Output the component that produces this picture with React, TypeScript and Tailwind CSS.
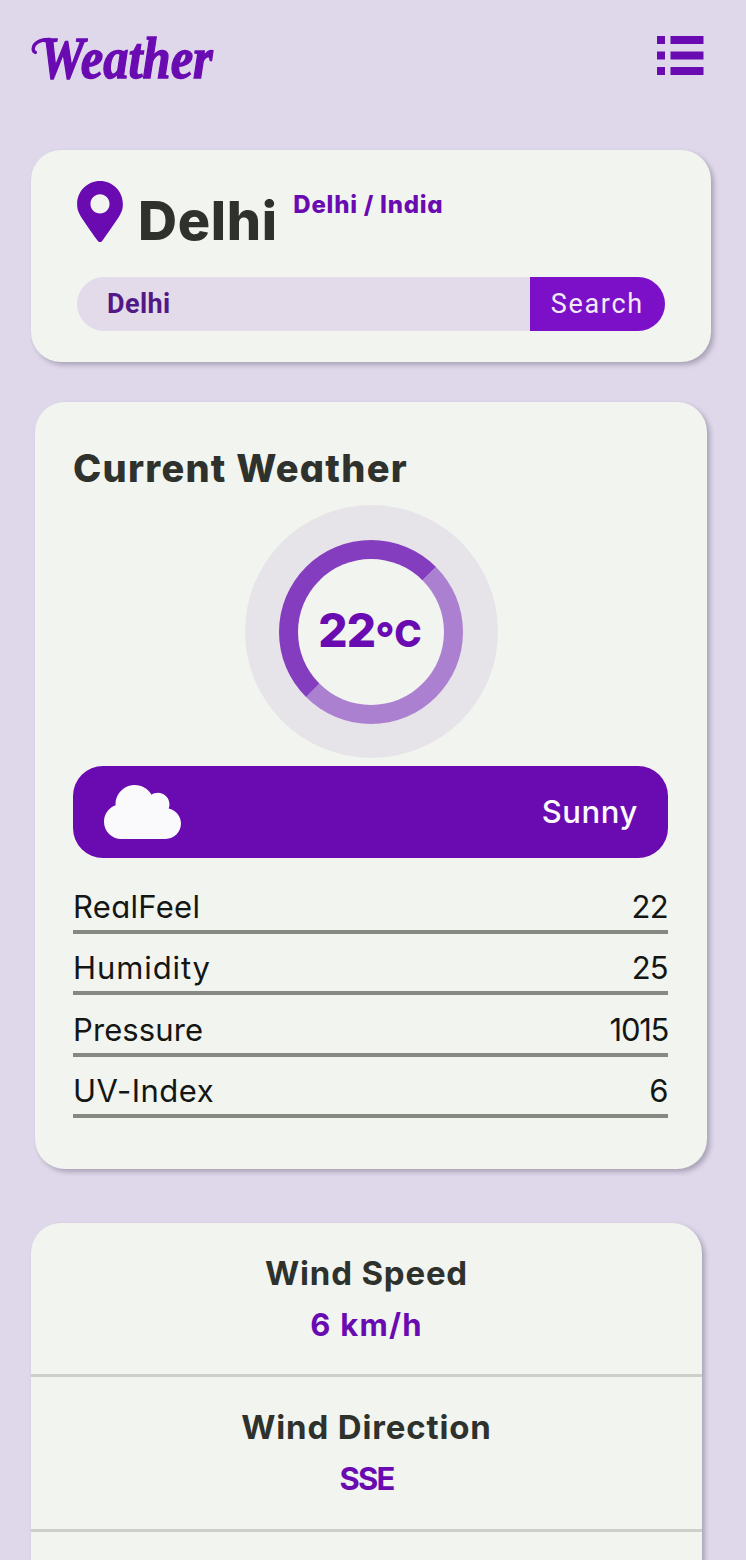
import { FaCloud, FaMapMarkerAlt } from "react-icons/fa";

type Reading = { label: string; value: string; labelClass: string; valueClass: string };

const readings: Reading[] = [
  { label: "RealFeel", value: "22", labelClass: "tracking-[0.3px]", valueClass: "tracking-[-0.7px]" },
  { label: "Humidity", value: "25", labelClass: "tracking-[0.9px]", valueClass: "tracking-[-0.7px]" },
  { label: "Pressure", value: "1015", labelClass: "tracking-[0.1px]", valueClass: "tracking-[-1.3px]" },
  { label: "UV-Index", value: "6", labelClass: "tracking-[0.5px]", valueClass: "tracking-[-0.5px]" },
];

const wind: Reading[] = [
  { label: "Wind Speed", value: "6 km/h", labelClass: "tracking-[0.8px]", valueClass: "tracking-[1.2px]" },
  { label: "Wind Direction", value: "SSE", labelClass: "tracking-[0.85px]", valueClass: "tracking-[-1.8px]" },
];

function MenuIcon() {
  return (
    <svg className="h-[39px] w-[47px]" viewBox="0 0 47 39" fill="currentColor" aria-hidden="true">
      {[0, 15.5, 31].map((y) => (
        <g key={y}>
          <rect x="0" y={y} width="8" height="8" />
          <rect x="13.5" y={y} width="33" height="8" />
        </g>
      ))}
    </svg>
  );
}

function Header() {
  return (
    <header className="flex h-[150px] items-start justify-between pl-[31px] pr-[42.5px] text-[#6a0bb2]">
      <div className="relative mt-[27px] h-[60px] w-[190px]">
        <svg
          className="absolute left-0 top-[10px] h-[20px] w-[22px]"
          viewBox="0 0 22 20"
          fill="none"
          stroke="currentColor"
          strokeWidth="3.4"
          strokeLinecap="round"
          aria-hidden="true"
        >
          <path d="M19 2.500C9 2 2.200 6.500 2.200 12c0 2 0.800 3 2.200 3.400" />
        </svg>
        <h1 className="origin-left scale-x-[0.85] pl-[10px] pt-[0.5px] font-['Liberation_Serif',serif] text-[59.5px] font-bold italic leading-[60px] [-webkit-text-stroke:1.4px_#6a0bb2]">
          Weather
        </h1>
      </div>
      <button className="mt-[35.5px]" aria-label="Menu">
        <MenuIcon />
      </button>
    </header>
  );
}

function LocationCard() {
  return (
    <section className="ml-[31px] h-[212px] w-[680px] rounded-[30px] bg-[#f1f4ef] pl-[46px] pt-[31px] shadow-[3px_3px_5px_rgba(50,40,65,0.3)]">
      <div className="flex h-[96px] items-start">
        <FaMapMarkerAlt className="h-[61px] w-[46px] text-[#6a0bb2]" />
        <h2 className="ml-[15px] mt-[10px] text-[54px] font-extrabold leading-[60px] tracking-[0.7px] text-[#2e312c]">
          Delhi
        </h2>
        <p className="ml-[15.5px] mt-[12px] text-[24px] font-extrabold leading-[24px] tracking-[0.75px] text-[#6a0bb2]">
          Delhi / India
        </p>
      </div>
      <div className="flex h-[54px] w-[587.5px] items-center overflow-hidden rounded-[27px] bg-[#e3daea] font-[Roboto,sans-serif] text-[27px]">
        <span className="flex-1 pl-[30px] font-bold tracking-[0.4px] text-[#521885]">Delhi</span>
        <button className="h-full w-[134.5px] bg-[#7b10c8] tracking-[1.7px] text-[#f1eaf6]">Search</button>
      </div>
    </section>
  );
}

function CurrentWeather() {
  return (
    <section className="ml-[35px] mt-[39.5px] h-[767.5px] w-[672px] rounded-[30px] bg-[#f1f4ef] pl-[38px] pr-[39px] pt-[46.5px] shadow-[3px_3px_5px_rgba(50,40,65,0.3)]">
      <h2 className="text-[38px] font-extrabold leading-[40px] tracking-[1.25px] text-[#2e312c]">Current Weather</h2>
      <div className="ml-[171.5px] mt-[17px] flex size-[253px] items-center justify-center rounded-full bg-[#e7e4e9]">
        <div className="flex size-[184px] items-center justify-center rounded-full border-[19px] border-b-[#ac80d1] border-l-[#853dbf] border-r-[#ac80d1] border-t-[#853dbf] bg-[#f1f4ef]">
          <p className="-ml-[2px] flex items-baseline text-[46px] font-extrabold leading-[46px] text-[#6a0bb2]">
            <span className="tracking-[-0.8px]">22</span>
            <span className="relative top-[6px] text-[42px] tracking-[-1px]">°</span>
            <span className="ml-[0.5px] text-[37px]">C</span>
          </p>
        </div>
      </div>
      <div className="mt-[8px] flex h-[92px] items-center justify-between rounded-[30px] bg-[#6a0bb2] pl-[31px] pr-[30px] text-[#faf9fc]">
        <FaCloud className="h-[62px] w-[77px]" />
        <span className="text-[31px] font-medium tracking-[0.6px]">Sunny</span>
      </div>
      <dl className="mt-[14px]">
        {readings.map((r) => (
          <div
            key={r.label}
            className="flex h-[61.6px] justify-between border-b-4 border-[#868982] pt-[14.5px] text-[31px] leading-[40px] text-[#141613]"
          >
            <dt className={r.labelClass}>{r.label}</dt>
            <dd className={r.valueClass}>{r.value}</dd>
          </div>
        ))}
      </dl>
    </section>
  );
}

function WindCard() {
  return (
    <section className="ml-[31px] mt-[54px] h-[500px] w-[671px] rounded-[30px] bg-[#f1f4ef] shadow-[3px_3px_5px_rgba(50,40,65,0.3)]">
      {wind.map((w) => (
        <div key={w.label} className="h-[154.3px] border-b-[3px] border-[#cdd0ca] pt-[29.5px] text-center font-bold leading-[40px]">
          <h3 className={`text-[33px] text-[#2e312c] ${w.labelClass}`}>{w.label}</h3>
          <p className={`mt-[12px] text-[31px] text-[#6a0bb2] ${w.valueClass}`}>{w.value}</p>
        </div>
      ))}
    </section>
  );
}

export default function App() {
  return (
    <main className="h-[1560px] w-full overflow-hidden bg-[#dfd8ea] font-[Inter,sans-serif] [font-feature-settings:'cv11']">
      <Header />
      <LocationCard />
      <CurrentWeather />
      <WindCard />
    </main>
  );
}
